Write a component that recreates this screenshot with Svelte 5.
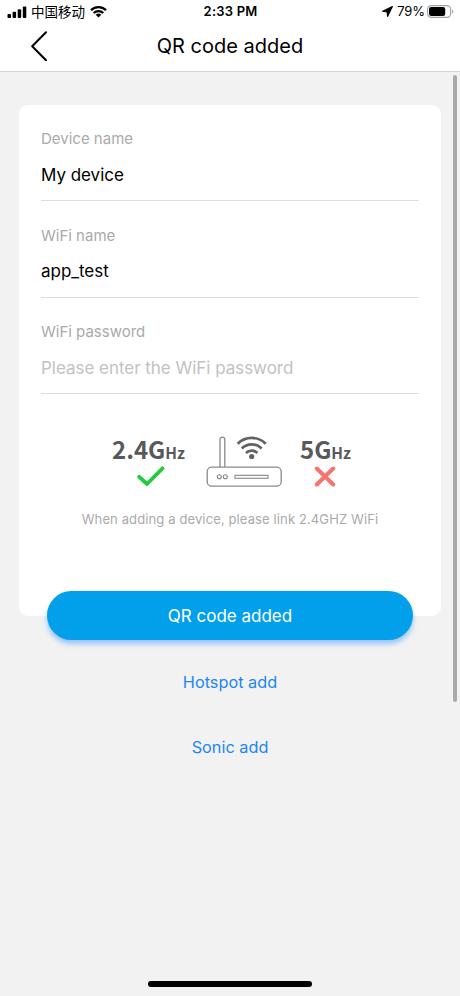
<script lang="ts">
  let deviceName = 'My device';
  let wifiName = 'app_test';
  let wifiPassword = '';
</script>

<svelte:head>
  <title>QR code added</title>
</svelte:head>

<div class="screen">
  <div class="status-bar">
    <div class="status-left">
      <svg width="20" height="12" viewBox="0 0 20 12" aria-hidden="true">
        <rect x="0.5" y="8" width="3.5" height="4" rx="1" />
        <rect x="5.6" y="5.8" width="3.5" height="6.2" rx="1" />
        <rect x="10.7" y="3.3" width="3.5" height="8.7" rx="1" />
        <rect x="15.8" y="0.5" width="3.5" height="11.5" rx="1" />
      </svg>
      <span class="carrier">中国移动</span>
      <svg class="status-wifi" width="17" height="13" viewBox="0 0 17 13" aria-hidden="true">
        <path d="M1 5.2a10.8 10.8 0 0 1 15 0M3.7 8a7 7 0 0 1 9.6 0" fill="none" stroke="#000" stroke-width="2.3" />
        <path d="M8.5 12.4 5.7 9.7a4.1 4.1 0 0 1 5.6 0z" />
      </svg>
    </div>
    <span class="clock">2:33 PM</span>
    <div class="status-right">
      <svg width="11" height="11" viewBox="0 0 11 11" aria-hidden="true">
        <path d="M10.4.6.6 5.2l4.5.8.5 4.4z" stroke="#000" stroke-width="1.1" stroke-linejoin="round" />
      </svg>
      <span class="percent">79%</span>
      <svg width="27" height="13" viewBox="0 0 27 13" aria-hidden="true">
        <rect x="0.6" y="0.6" width="23" height="11.8" rx="3.6" fill="none" stroke="#a0a0a0" stroke-width="1.1" />
        <rect x="2" y="2" width="16.2" height="9" rx="2.2" />
        <path d="M25 4.5c1.8.6 1.8 3.4 0 4z" fill="#a0a0a0" />
      </svg>
    </div>
  </div>

  <header class="nav">
    <button class="back" type="button" aria-label="Back">
      <svg width="17" height="30" viewBox="0 0 17 30">
        <path d="M16 1.2 2.2 15.2l13.8 14" fill="none" stroke="#000" stroke-width="2" stroke-linecap="round" stroke-linejoin="round" />
      </svg>
    </button>
    <h1>QR code added</h1>
  </header>

  <main>
    <section class="card">
      <div class="field">
        <label for="device-name">Device name</label>
        <input id="device-name" type="text" bind:value={deviceName} />
      </div>
      <div class="field">
        <label for="wifi-name">WiFi name</label>
        <input id="wifi-name" type="text" bind:value={wifiName} />
      </div>
      <div class="field">
        <label for="wifi-password">WiFi password</label>
        <input id="wifi-password" type="password" placeholder="Please enter the WiFi password" bind:value={wifiPassword} />
      </div>

      <div class="bands">
        <div class="band band-ok">
          <span class="freq">2.4G<small>Hz</small></span>
          <svg width="28" height="21" viewBox="0 0 28 21" aria-hidden="true">
            <path d="M2.2 10.8 10 18 25.5 2.3" fill="none" stroke="#27c93f" stroke-width="3.8" stroke-linecap="round" stroke-linejoin="round" />
          </svg>
        </div>
        <svg class="router" width="77" height="52" viewBox="0 0 77 52" aria-hidden="true">
          <g fill="none" stroke="#898989" stroke-width="1.3">
            <path d="M14 31V3.6a2.4 2.4 0 0 1 4.8 0V31" />
            <rect x="1.2" y="31.2" width="74" height="19" rx="4.5" />
            <circle cx="13.3" cy="40.8" r="2" stroke-width="1.1" />
            <circle cx="19.3" cy="40.8" r="2" stroke-width="1.1" />
            <rect x="29" y="39.3" width="33" height="3" stroke-width="1.1" />
          </g>
          <g fill="none" stroke="#626262" stroke-width="2.7">
            <path d="M31.7 7.8a19.5 19.5 0 0 1 28 0" />
            <path d="M35.8 12.5a13.8 13.8 0 0 1 19.8 0" />
            <path d="M40 17a8 8 0 0 1 11.4 0" />
          </g>
          <circle cx="45.7" cy="20.5" r="2.6" fill="#626262" />
        </svg>
        <div class="band band-no">
          <span class="freq">5G<small>Hz</small></span>
          <svg width="22" height="21" viewBox="0 0 22 21" aria-hidden="true">
            <path d="M2.8 2.5 19.2 18.5M19.2 2.5 2.8 18.5" fill="none" stroke="#f9736d" stroke-width="4" stroke-linecap="round" />
          </svg>
        </div>
      </div>
      <p class="hint">When adding a device, please link 2.4GHZ WiFi</p>
    </section>

    <button class="submit" type="button">QR code added</button>
    <button class="link hotspot" type="button">Hotspot add</button>
    <button class="link sonic" type="button">Sonic add</button>
  </main>

  <div class="scrollbar"></div>
  <div class="home-indicator"></div>
</div>

<style>
  :global(body) {
    background: #f2f2f2;
  }

  .screen {
    position: relative;
    box-sizing: border-box;
    width: 460px;
    height: 996px;
    overflow: hidden;
    background: #f2f2f2;
    color: #000;
    font-family: Inter, "Noto Sans CJK SC", sans-serif;
  }

  .screen * {
    box-sizing: border-box;
  }

  svg {
    display: block;
    flex: none;
  }

  button {
    padding: 0;
    border: 0;
    background: none;
    font: inherit;
  }

  .status-bar {
    display: grid;
    grid-template-columns: 1fr auto 1fr;
    align-items: center;
    height: 23px;
    padding: 0 6px 0 7px;
    background: #fff;
    font-size: 13px;
    line-height: 23px;
  }

  .status-left,
  .status-right {
    display: flex;
    align-items: center;
  }

  .carrier {
    margin-left: 4px;
    font-family: "Noto Sans CJK SC", sans-serif;
    font-size: 13.5px;
    line-height: 21px;
  }

  .status-wifi {
    margin-left: 5px;
  }

  .clock {
    font-weight: 600;
    letter-spacing: 0.2px;
  }

  .status-right {
    justify-content: flex-end;
  }

  .percent {
    margin: 0 2px 0 4px;
    letter-spacing: -0.1px;
  }

  .nav {
    display: grid;
    grid-template-columns: 60px 1fr 60px;
    align-items: center;
    height: 49px;
    padding-bottom: 2px;
    border-bottom: 1px solid #d5d5d5;
    background: #fff;
  }

  .back {
    padding-left: 30px;
  }

  h1 {
    margin: 0;
    font-size: 20px;
    font-weight: 400;
    line-height: 46px;
    text-align: center;
  }

  main {
    display: flex;
    flex-direction: column;
    align-items: center;
    padding-top: 33px;
  }

  .card {
    width: 422px;
    height: 511px;
    padding: 22px 22px 0;
    border-radius: 9px;
    background: #fff;
  }

  .field {
    height: 96.6px;
    padding-top: 1px;
  }

  label {
    display: block;
    color: #aaa;
    font-size: 15px;
    line-height: 22px;
  }

  input {
    display: block;
    width: 100%;
    height: 51px;
    padding: 0 0 1px;
    border: 0;
    border-bottom: 1px solid #dedede;
    border-radius: 0;
    background: none;
    color: #000;
    font: inherit;
    font-size: 17px;
    letter-spacing: -0.03px;
    outline: none;
  }

  input::placeholder {
    color: #c2c2c2;
    opacity: 1;
  }

  .bands {
    display: flex;
    justify-content: center;
    height: 73px;
    margin-top: 19px;
    padding-left: 3px;
  }

  .band {
    display: flex;
    flex-direction: column;
    align-items: center;
  }

  .freq {
    height: 30px;
    color: #58595b;
    font-family: "Noto Sans CJK SC", sans-serif;
    font-size: 24px;
    font-weight: 700;
    line-height: 26px;
    white-space: nowrap;
  }

  .band-ok svg {
    margin-left: 5px;
  }

  small {
    font-size: 15.5px;
  }

  .router {
    margin: 0 17px 0 21px;
  }

  .hint {
    margin: 0;
    color: #aaa;
    font-size: 13px;
    letter-spacing: 0.12px;
    line-height: 20px;
    text-align: center;
    white-space: nowrap;
  }

  .submit {
    width: 366px;
    height: 49px;
    margin-top: -25px;
    border-radius: 25px;
    background: #029fea;
    box-shadow: 0 4px 5px rgba(70, 150, 255, 0.5);
    color: #fff;
    font-size: 17px;
  }

  .link {
    height: 24px;
    color: #2386ee;
    font-size: 16.3px;
    line-height: 24px;
  }

  .hotspot {
    margin-top: 30px;
  }

  .sonic {
    margin-top: 41px;
  }

  /* overlays drawn by the system above the page */
  .scrollbar {
    position: absolute;
    top: 75px;
    right: 3px;
    width: 4px;
    height: 627px;
    border-radius: 2px;
    background: #a9a9a9;
  }

  .home-indicator {
    position: absolute;
    bottom: 9px;
    left: 148px;
    width: 164px;
    height: 6px;
    border-radius: 3px;
    background: #000;
  }
</style>
